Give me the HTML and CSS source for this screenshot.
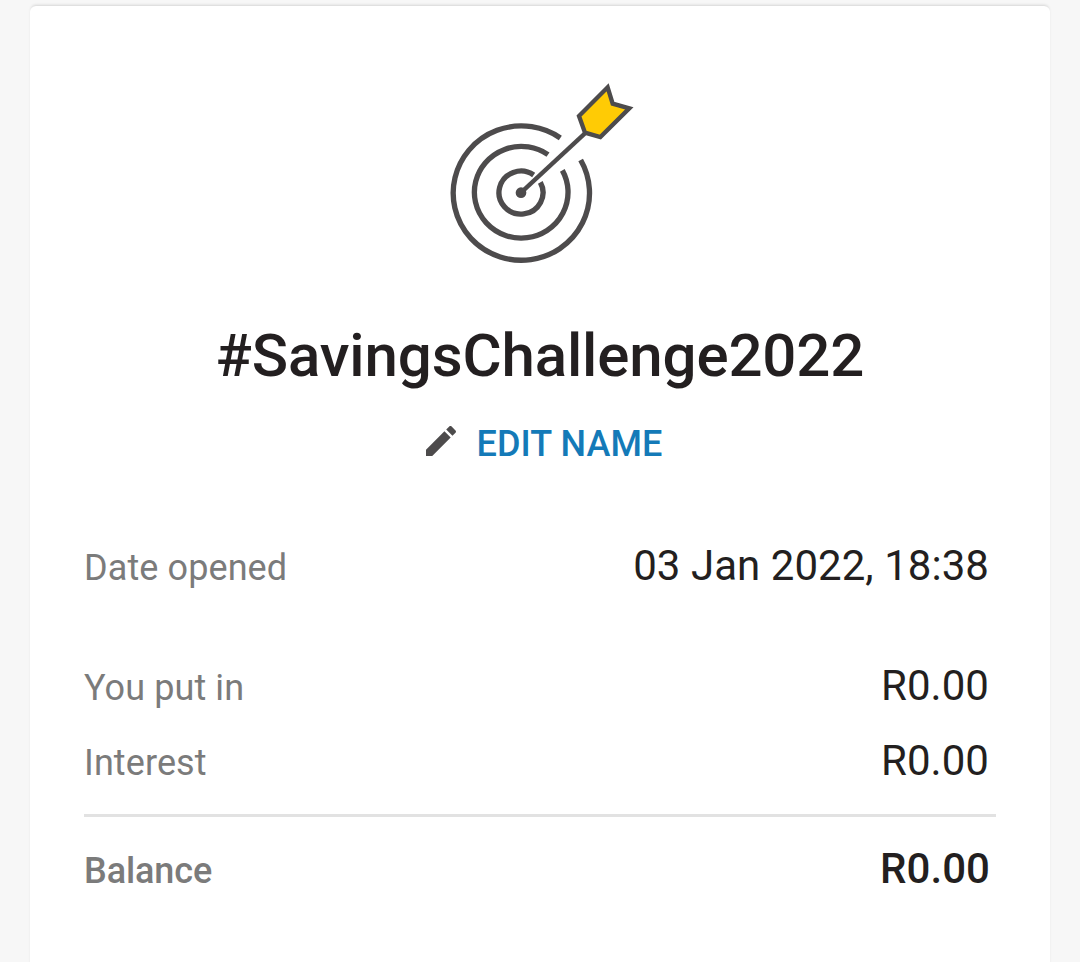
FILE: index.html
```html
<!DOCTYPE html>
<html lang="en">
<head>
    <meta charset="UTF-8">
    <meta name="viewport" content="width=device-width, initial-scale=1.0">
    <title>#SavingsChallenge2022</title>
    <link rel="stylesheet" href="styles.css">
</head>
<body>

<div class="card">
    <!-- Target with arrow -->
    <svg class="goal-icon" viewBox="0 0 600 600" fill="none" stroke="#4d4b4c" stroke-width="16">
        <path d="M362 190A204.5 201.5 0 1 0 423 256" transform="translate(-1 -1)"/>
        <path d="M324 239A140.5 137.5 0 1 0 367 286"/>
        <path d="M281 299A66 64.5 0 1 0 301 321" transform="translate(0 1)"/>
        <circle cx="243" cy="353" r="16" fill="#4d4b4c" stroke="none"/>
        <path d="M243 353L434 176" stroke-width="13"/>
        <path d="M503 37L518 86L568 100L481 186L435 173L417 123Z" fill="#ffcb05" stroke-width="13"/>
    </svg>

    <h1>#SavingsChallenge2022</h1>

    <a class="edit-name">
        <svg class="edit-icon" viewBox="0 0 24 24" fill="#4d4b4c">
            <path d="M3 17.25V21h3.75L17.81 9.94l-3.75-3.75L3 17.25zM20.71 7.04c.39-.39.39-1.02 0-1.41l-2.34-2.34c-.39-.39-1.02-.39-1.41 0l-1.83 1.83 3.75 3.75 1.83-1.83z"/>
        </svg>
        <span>EDIT NAME</span>
    </a>

    <div class="details">
        <div class="row date-row">
            <span class="label">Date opened</span>
            <span class="value">03 Jan 2022, 18:38</span>
        </div>
        <div class="row">
            <span class="label">You put in</span>
            <span class="value">R0.00</span>
        </div>
        <div class="row interest-row">
            <span class="label">Interest</span>
            <span class="value">R0.00</span>
        </div>
        <div class="row total">
            <span class="label">Balance</span>
            <span class="value">R0.00</span>
        </div>
    </div>
</div>

</body>
</html>
```

FILE: styles.css
```css
body {
    font-family: Roboto, sans-serif;
    background-color: #f7f7f7;
    color: #231f20;
    margin: 0;
    padding: 6px 30px 0;
    height: 956px;
    overflow: hidden;
}

.card {
    display: flex;
    flex-direction: column;
    align-items: center;
    box-sizing: border-box;
    height: 980px;
    padding: 69px 54px 0;
    background-color: #fff;
    border-radius: 6px;
    box-shadow: 0 -2px 3px -1px rgba(0, 0, 0, 0.14);
}

.goal-icon {
    width: 200px;
    height: 200px;
}

h1 {
    margin: 46px 0 0;
    font-size: 60px;
    font-weight: 500;
    line-height: 70px;
    letter-spacing: -0.13px;
}

.edit-name {
    display: flex;
    align-items: center;
    gap: 15px;
    margin-top: 30px;
    padding-left: 4px;
    color: #147ab8;
    font-size: 36px;
    font-weight: 500;
    line-height: 40px;
    letter-spacing: 0.1px;
}

.edit-name span {
    height: 40px;
    line-height: 46px;
}

.edit-icon {
    width: 40px;
    height: 40px;
}

.details {
    width: 100%;
    margin-top: 80px;
}

.row {
    display: flex;
    justify-content: space-between;
    align-items: baseline;
    height: 75px;
    padding-right: 7px;
    line-height: 50px;
}

.date-row {
    height: 120px;
}

.interest-row {
    height: 78px;
}

.label {
    color: #7b7b7b;
    font-size: 36px;
    letter-spacing: 0.1px;
}

.value {
    font-size: 42px;
    letter-spacing: 0.05px;
}

.total {
    padding-top: 27px;
    padding-right: 6px;
    margin-right: 0;
    border-top: 3px solid #e2e2e2;
    font-weight: 500;
}

.total .label {
    letter-spacing: -0.1px;
}
```
